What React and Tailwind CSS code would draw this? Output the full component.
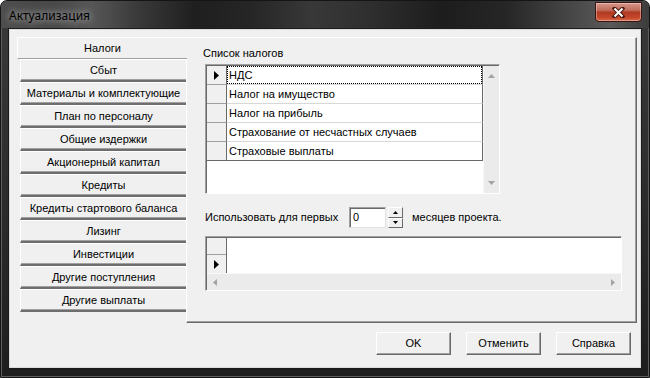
import React from 'react';

const tabs = [
  'Налоги',
  'Сбыт',
  'Материалы и комплектующие',
  'План по персоналу',
  'Общие издержки',
  'Акционерный капитал',
  'Кредиты',
  'Кредиты стартового баланса',
  'Лизинг',
  'Инвестиции',
  'Другие поступления',
  'Другие выплаты',
];

const taxes = [
  'НДС',
  'Налог на имущество',
  'Налог на прибыль',
  'Страхование от несчастных случаев',
  'Страховые выплаты',
];

// small black row indicator
const Pointer = () => (
  <svg width="5" height="9" viewBox="0 0 5 9">
    <polygon points="0,0 5,4.5 0,9" fill="#000" />
  </svg>
);

// greyed scroll arrow
const ScrollArrow = ({ dir }) => {
  const pts = {
    up: '0,4 3.5,0 7,4',
    down: '0,0 3.5,4 7,0',
    left: '4,0 0,3.5 4,7',
    right: '0,0 4,3.5 0,7',
  }[dir];
  const horiz = dir === 'left' || dir === 'right';
  return (
    <svg width={horiz ? 4 : 7} height={horiz ? 7 : 4} viewBox={horiz ? '0 0 4 7' : '0 0 7 4'}>
      <polygon points={pts} fill="#a3a3a3" />
    </svg>
  );
};

const Button = ({ children }) => (
  <button className="w-[75px] h-[23px] bg-[#f0f0f0] border border-t-white border-l-white border-r-[#696969] border-b-[#696969] shadow-[inset_-1px_-1px_0_#a0a0a0] text-[11px] leading-none text-black">
    {children}
  </button>
);

export default function App() {
  return (
    <div className="w-[650px] h-[378px] flex flex-col rounded-t-[7px] border border-[#151515] bg-[linear-gradient(180deg,#3a3a3a,#2a2a2a_60%,#1e1e1e)] shadow-[inset_0_0_0_1px_#5e5e5e] overflow-hidden font-['Liberation_Sans',sans-serif] text-[11px] text-black">
      {/* Title bar */}
      <div className="h-[27px] flex items-start justify-between pl-[8px] pr-[7px] rounded-t-[6px] bg-[linear-gradient(90deg,#4e4e4e_0%,#4a4a4a_8%,#575757_14%,#3a3a3a_21%,#1f1f1f_30%,#252525_38%,#383838_48%,#303030_56%,#1d1d1d_68%,#262626_78%,#474747_88%,#5a5a5a_94%,#3c3c3c_100%)]">
        <div className="pt-[7px] font-['Noto_Sans',sans-serif] text-[12px] leading-[16px] text-black [text-shadow:0_0_6px_#a8a8a8,0_0_10px_#8c8c8c,0_0_14px_#7a7a7a]">
          Актуализация
        </div>
        <div className="mt-[1px] w-[47px] h-[20px] flex items-center justify-center rounded-b-[4px] border border-[#3a1410] bg-[linear-gradient(180deg,#d9978a_0%,#c06b5a_40%,#b03a22_52%,#c4472a_80%,#d9694a_100%)] shadow-[inset_0_0_0_1px_rgba(255,255,255,0.35)]">
          <svg width="13" height="11" viewBox="0 0 13 11">
            <path d="M2.5 1.5 L10.5 9.5 M10.5 1.5 L2.5 9.5" stroke="#4a1a12" strokeWidth="4" strokeLinecap="square" />
            <path d="M2.5 1.5 L10.5 9.5 M10.5 1.5 L2.5 9.5" stroke="#fff" strokeWidth="2" />
          </svg>
        </div>
      </div>

      {/* Client area */}
      <div className="flex-1 mx-[7px] mb-[8px] border border-[#1b1b1b] flex">
        <div className="flex-1 border border-[#dcdcdc] bg-[#f0f0f0] flex flex-col pl-[7px] pt-[7px] pr-[3px]">
          <div className="flex h-[286px]">
            {/* Tabs */}
            <div className="w-[169px] flex flex-col">
              {tabs.map((t, i) =>
                i === 0 ? (
                  <div
                    key={t}
                    className="relative z-10 w-[170px] h-[22px] shrink-0 flex items-center justify-center bg-[#f0f0f0] border-t border-l border-t-white border-l-white border-b border-b-[#a0a0a0]"
                  >
                    {t}
                  </div>
                ) : (
                  <div
                    key={t}
                    className="ml-[3px] w-[166px] h-[23px] shrink-0 flex items-center justify-center bg-[#f0f0f0] border-t border-l border-t-white border-l-white border-b-2 border-b-[#6e6e6e] shadow-[inset_0_-1px_0_#a0a0a0]"
                  >
                    {t}
                  </div>
                )
              )}
            </div>

            {/* Tab page */}
            <div className="w-[451px] h-[286px] border border-l-white border-t-white border-r-[#696969] border-b-[#696969] shadow-[inset_-1px_-1px_0_#a0a0a0] pl-[16px] pt-[9px] flex flex-col">
              <div className="leading-[13px]">Список налогов</div>

              {/* Tax grid */}
              <div className="mt-[4px] ml-[2px] w-[295px] h-[130px] border border-t-[#a0a0a0] border-l-[#a0a0a0] border-r-white border-b-white">
                <div className="h-full border-t border-l border-[#696969] bg-white flex">
                  <div className="w-[276px] flex flex-col">
                    {taxes.map((tax, i) => {
                      const last = i === taxes.length - 1;
                      return (
                        <div key={tax} className="flex h-[19px]">
                          <div
                            className={`w-[20px] bg-[#f0f0f0] border-r border-r-[#696969] border-b flex items-center justify-center ${
                              last ? 'border-b-[#696969]' : 'border-b-[#a0a0a0]'
                            }`}
                          >
                            {i === 0 && <Pointer />}
                          </div>
                          <div
                            className={`w-[256px] border-r border-r-[#696969] border-b ${
                              last ? 'border-b-[#696969]' : 'border-b-[#d8d8d8]'
                            }`}
                          >
                            {i === 0 ? (
                              <div className="h-full border border-dotted border-black flex items-center pl-[1px] leading-none">
                                {tax}
                              </div>
                            ) : (
                              <div className="h-full flex items-center pl-[2px] leading-none">{tax}</div>
                            )}
                          </div>
                        </div>
                      );
                    })}
                  </div>
                  {/* vertical scrollbar */}
                  <div className="w-[16px] bg-[#ebebeb] border-l border-l-[#f7f7f7] flex flex-col justify-between items-center py-[8px]">
                    <ScrollArrow dir="up" />
                    <ScrollArrow dir="down" />
                  </div>
                </div>
              </div>

              {/* Months spin */}
              <div className="mt-[13px] ml-[2px] h-[21px] flex items-center">
                <div className="w-[144px] leading-none">Использовать для первых</div>
                <div className="w-[37px] h-[21px] bg-white border border-t-[#a0a0a0] border-l-[#a0a0a0] border-r-[#e3e3e3] border-b-[#e3e3e3] shadow-[inset_1px_1px_0_#696969] flex items-center pl-[3px] leading-none">
                  0
                </div>
                <div className="ml-[2px] w-[15px] h-[21px] flex flex-col">
                  <div className="flex-1 bg-[#f0f0f0] border border-t-white border-l-white border-r-[#696969] border-b-[#696969] flex items-center justify-center">
                    <svg width="5" height="3" viewBox="0 0 5 3">
                      <polygon points="0,3 2.5,0 5,3" fill="#000" />
                    </svg>
                  </div>
                  <div className="flex-1 bg-[#f0f0f0] border border-t-white border-l-white border-r-[#696969] border-b-[#696969] flex items-center justify-center">
                    <svg width="5" height="3" viewBox="0 0 5 3">
                      <polygon points="0,0 2.5,3 5,0" fill="#000" />
                    </svg>
                  </div>
                </div>
                <div className="ml-[9px] leading-none">месяцев проекта.</div>
              </div>

              {/* Second grid */}
              <div className="mt-[8px] ml-[2px] w-[417px] h-[55px] border border-t-[#a0a0a0] border-l-[#a0a0a0] border-r-white border-b-white">
                <div className="h-full border-t border-l border-[#696969] bg-white flex flex-col">
                  <div className="flex-1 flex">
                    <div className="w-[20px] flex flex-col border-r border-r-[#696969]">
                      <div className="h-[17px] bg-[#f0f0f0] border-b border-b-[#a0a0a0]" />
                      <div className="flex-1 bg-[#f0f0f0] flex items-center justify-center">
                        <Pointer />
                      </div>
                    </div>
                    <div className="flex-1 bg-white" />
                  </div>
                  {/* horizontal scrollbar */}
                  <div className="h-[17px] bg-[#ebebeb] border-t border-t-[#f7f7f7] flex items-center justify-between px-[6px]">
                    <ScrollArrow dir="left" />
                    <ScrollArrow dir="right" />
                  </div>
                </div>
              </div>
            </div>
          </div>

          {/* Dialog buttons */}
          <div className="mt-[9px] pr-[6px] flex justify-end gap-[15px]">
            <Button>OK</Button>
            <Button>Отменить</Button>
            <Button>Справка</Button>
          </div>
        </div>
      </div>
    </div>
  );
}
